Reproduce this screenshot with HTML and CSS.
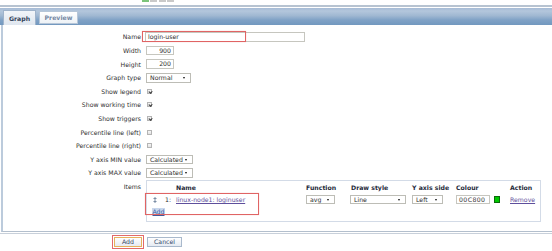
FILE: index.html
```html
<!DOCTYPE html>
<html>
<head>
<meta charset="utf-8">
<link rel="stylesheet" href="styles.css">
</head>
<body>
<div class="topstrip"><span class="sq green"></span><span class="sq"></span><span class="sq"></span><span class="sq"></span></div>
<div class="rule"></div>
<div class="tabbar">
  <div class="tab active">Graph</div>
  <div class="tab">Preview</div>
</div>
<div class="panel">
  <div class="form">
    <div class="lbl">Name</div>
    <div class="field"><span class="hl-wrap"><span class="input name">login-user</span><span class="hl hl-name"></span></span></div>

    <div class="lbl">Width</div>
    <div class="field"><span class="input num">900</span></div>

    <div class="lbl">Height</div>
    <div class="field"><span class="input num">200</span></div>

    <div class="lbl">Graph type</div>
    <div class="field"><span class="sel w-type">Normal<i class="arr"></i></span></div>

    <div class="lbl">Show legend</div>
    <div class="field"><span class="cb on"></span></div>

    <div class="lbl">Show working time</div>
    <div class="field"><span class="cb on"></span></div>

    <div class="lbl">Show triggers</div>
    <div class="field"><span class="cb on"></span></div>

    <div class="lbl">Percentile line (left)</div>
    <div class="field"><span class="cb"></span></div>

    <div class="lbl">Percentile line (right)</div>
    <div class="field"><span class="cb"></span></div>

    <div class="lbl">Y axis MIN value</div>
    <div class="field"><span class="sel w-calc">Calculated<i class="arr"></i></span></div>

    <div class="lbl">Y axis MAX value</div>
    <div class="field"><span class="sel w-calc">Calculated<i class="arr"></i></span></div>

    <div class="lbl items-lbl">Items</div>
    <div class="field items-field">
      <div class="items">
        <div class="irow head">
          <span></span><span>Name</span><span>Function</span><span>Draw style</span><span>Y axis side</span><span>Colour</span><span>Action</span>
        </div>
        <div class="irow item">
          <span class="numcell"><svg class="drag" width="4" height="6" viewBox="0 0 4 6"><path d="M2 0 L4 2 H0 Z M2 6 L4 4 H0 Z" fill="#7c8ea6"/><rect x="1.5" y="2" width="1" height="2" fill="#7c8ea6"/></svg><span class="no">1:</span></span>
          <span><a class="lnk" href="#">linux-node1: loginuser</a></span>
          <span><span class="sel w-avg">avg<i class="arr"></i></span></span>
          <span><span class="sel w-line">Line<i class="arr"></i></span></span>
          <span><span class="sel w-left">Left<i class="arr"></i></span></span>
          <span class="colcell"><span class="input colour">00C800</span><span class="swatch"></span></span>
          <span><a class="lnk" href="#">Remove</a></span>
        </div>
        <div class="addrow"><a class="addlink" href="#">Add</a></div>
        <span class="hl hl-row"></span>
      </div>
    </div>
  </div>
</div>
<div class="rule2"></div>
<div class="buttons">
  <span class="btn-focus"><span class="btn add">Add</span></span>
  <span class="btn cancel">Cancel</span>
</div>
</body>
</html>
```

FILE: styles.css
```css
* { box-sizing: border-box; }
html, body { margin: 0; padding: 0; background: #fff; }
body {
  font-family: "DejaVu Sans", Verdana, sans-serif;
  font-size: 6.2px;
  color: #2e2e2e;
  width: 552px;
  height: 251px;
  overflow: hidden;
}

.topstrip { height: 2px; display: flex; gap: 1.3px; padding-left: 142px; }
.sq { width: 7px; height: 2px; background: #c9c9c9; }
.sq.green { background: #7cc47a; }

.rule { height: 1.5px; margin-top: 3px; background: #b7c3d1; }

.tabbar {
  margin-top: 1.5px;
  height: 17px;
  display: flex;
  align-items: flex-end;
  gap: 3px;
  padding-left: 3px;
  background: linear-gradient(#a6bbd5 0%, #b3c6dc 18%, #a2b9d3 45%, #7f a2c6 70%, #7298bf 100%);
  background: linear-gradient(#a6bbd5 0%, #b3c6dc 18%, #a0b8d2 45%, #80a2c6 70%, #7298bf 100%);
}
.tab {
  font-weight: bold;
  display: flex;
  align-items: center;
  justify-content: center;
}
.tab.active {
  width: 33px;
  height: 15px;
  color: #34445a;
  background: linear-gradient(#f2f5f9, #dfe6ef);
  border: 1px solid #9fb3cb;
  border-bottom: none;
}
.tab:not(.active) {
  width: 39px;
  height: 13px;
  margin-bottom: 1px;
  color: #7487a3;
  background: linear-gradient(#ffffff, #eef2f6);
  border: 1px solid #b6c6d8;
}

.panel {
  margin-left: 1px;
  border-left: 2px solid #bccbdc;
  border-bottom: 1px solid #b3bfcd;
  padding-top: 5.2px;
  padding-bottom: 9px;
}

.form {
  display: grid;
  grid-template-columns: 138px 1fr;
  grid-template-rows: repeat(11, 13.6px) auto;
  column-gap: 5px;
  align-items: center;
}
.lbl { text-align: right; white-space: nowrap; color: #2f2f2f; }
.field { display: flex; align-items: center; }

.input {
  display: inline-block;
  height: 9.5px;
  line-height: 8px;
  border: 1px solid #c6c6bf;
  background: #fff;
  padding: 0 2px;
  white-space: nowrap;
}
.input.name { width: 160px; margin-left: -1px; }
.input.num { width: 28px; text-align: right; }

.hl-wrap { position: relative; display: inline-block; }
.hl { position: absolute; border: 1px solid #e06464; pointer-events: none; }
.hl-name { left: -4px; top: -1.5px; width: 104px; height: 11px; box-shadow: 0 0 1px rgba(224,100,100,.4); }

.sel {
  position: relative;
  display: inline-block;
  height: 9.5px;
  line-height: 8px;
  border: 1px solid #bdbdb6;
  background: #fff;
  padding: 0 0 0 3px;
  white-space: nowrap;
}
.arr {
  position: absolute;
  right: 5px;
  top: 3px;
  width: 0; height: 0;
  border-left: 1.5px solid transparent;
  border-right: 1.5px solid transparent;
  border-top: 2.5px solid #111;
}
.w-type { width: 45px; }
.w-calc { width: 47px; }
.w-avg { width: 29px; }
.w-line { width: 56px; margin-left: -1px; }
.w-left { width: 31px; }

.cb {
  display: inline-block;
  width: 5px; height: 5px;
  margin-left: 1px;
  border: 1px solid #b4b4b4;
  background: linear-gradient(#f6f6f6, #e2e2e2);
  position: relative;
}
.cb.on::after {
  content: "";
  position: absolute;
  left: 0.6px; top: 0px;
  width: 1.5px; height: 2.4px;
  border-right: 1px solid #333;
  border-bottom: 1px solid #333;
  transform: rotate(40deg);
}

.items-lbl { align-self: start; line-height: 13px; }
.items-field { align-self: start; }
.items {
  position: relative;
  width: 395px;
  border: 1px solid #d3dbe7;
  padding-bottom: 5px;
}
.irow {
  display: grid;
  grid-template-columns: 29px 130px 45px 61px 44px 54px 1fr;
  align-items: center;
}
.irow.head { height: 12px; font-weight: bold; color: #1e2a3a; padding-top: 1px; }
.irow.item { height: 14px; }
.numcell { display: flex; align-items: center; padding-left: 6px; }
.drag { display: block; }
.no { margin-left: 8px; }
.lnk { color: #5e4f9c; text-decoration: underline; }
.colcell { display: flex; align-items: center; gap: 4px; }
.input.colour { width: 34px; color: #333; letter-spacing: 0.4px; }
.swatch { width: 6px; height: 7px; background: #00c800; border: 1px solid #0a6a0a; }
.addrow { height: 9px; padding-left: 5px; display: flex; align-items: center; }
.addlink { color: #3759a0; text-decoration: underline; background: #c9d7ec; padding: 0 0.5px; }
.hl-row { left: -2px; top: 12px; width: 114px; height: 22px; box-shadow: 0 0 1px rgba(224,100,100,.4); }

.rule2 { height: 1px; margin-top: 1.5px; background: #c8d0da; }

.buttons {
  display: flex;
  align-items: center;
  gap: 3px;
  padding-left: 112px;
  padding-top: 1px;
}
.btn-focus {
  display: inline-flex;
  border: 1px solid #e26a6a;
  padding: 0.5px 1px;
}
.btn {
  display: inline-flex;
  align-items: center;
  justify-content: center;
  height: 10.5px;
  color: #334a6b;
  background: linear-gradient(#ffffff, #e5ebf2);
  border: 1px solid #a9b9cc;
}
.btn.add { width: 28px; border-color: #e7b25c; color: #2c3e5e; }
.btn.cancel { width: 35px; }
```
